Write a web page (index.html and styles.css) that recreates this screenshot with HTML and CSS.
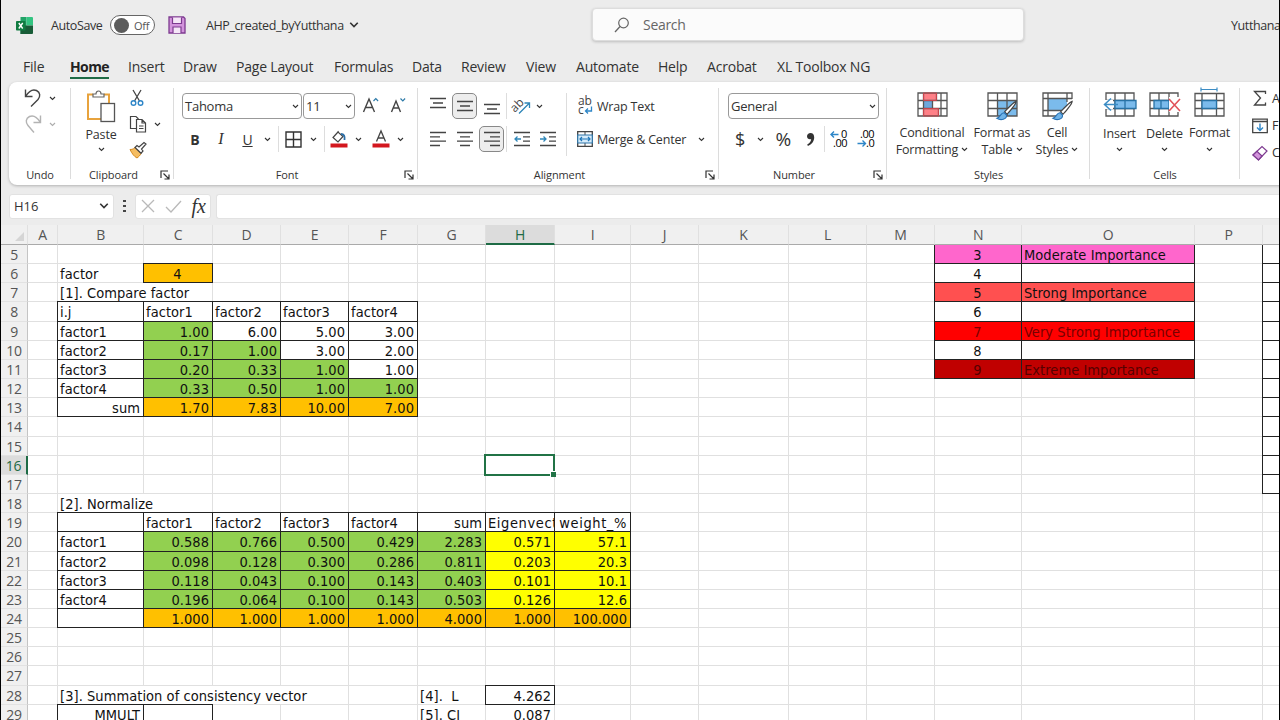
FILE: index.html
```html
<!DOCTYPE html>
<html lang="en">
<head>
  <meta charset="UTF-8">
  <meta name="viewport" content="width=device-width, initial-scale=1.0">
  <title>AHP_created_byYutthana</title>
  <link rel="stylesheet" href="styles.css">
</head>
<body>
  <!-- Shared icon symbols -->
  <svg class="defs">
    <symbol id="caret" viewBox="0 0 8 6"><path d="M1 1.2 4 4.2 7 1.2" fill="none" stroke="#333" stroke-width="1.3"/></symbol>
    <symbol id="launcher" viewBox="0 0 10 10"><path d="M1 8V1h7M3.5 3.5 8.5 8.5M9 4.5V9H4.5" fill="none" stroke="#333" stroke-width="1.2"/></symbol>
    <symbol id="brush" viewBox="0 0 24 24"><path d="M22.5 1.5c-2 .5-11 9-12.5 11.5l2.5 2.5C15 13.5 22.5 4 22.5 1.5z" fill="#fff" stroke="#444" stroke-width="1.3"/><path d="M9.5 14c-4-.5-3.5 4.5-8 6 4 2.5 11 1.5 10.5-3.5z" fill="#6fb3e8" stroke="#2872b5" stroke-width="1.2"/></symbol>
  </svg>

  <div class="window">
    <!-- Title bar -->
    <div class="titlebar">
      <svg class="logo" viewBox="0 0 17 17"><path d="M4.5 0h6v17h-6z" fill="#21a366"/><path d="M10.5 0H16a1 1 0 0 1 1 1v7.5h-6.5z" fill="#33c481"/><path d="M4.5 8.5H17V16a1 1 0 0 1-1 1H4.5z" fill="#185c37"/><rect y="4" width="9.5" height="9.5" rx=".8" fill="#107c41"/><path d="m2.8 6 3.9 5.5M6.7 6l-3.9 5.5" stroke="#fff" stroke-width="1.4"/></svg>
      <span class="autosave">AutoSave</span>
      <span class="toggle"><i></i>Off</span>
      <svg class="save" viewBox="0 0 18 18"><path d="M1 1h14.5L17 2.5V17H1z" fill="#d394dc" stroke="#7d3a90" stroke-width="1.3"/><path d="M4.5 1.5v6h9v-6M5 17v-6h8v6" fill="#f5e6f7" stroke="#7d3a90" stroke-width="1.2"/></svg>
      <span class="filename">AHP_created_byYutthana</span>
      <svg class="caret big"><use href="#caret"/></svg>
      <div class="search">
        <svg viewBox="0 0 16 16"><circle cx="9.5" cy="6" r="4.8" fill="none" stroke="#666" stroke-width="1.2"/><path d="M6 9.5 1 15" stroke="#666" stroke-width="1.3"/></svg>
        <span>Search</span>
      </div>
      <span class="user">Yutthana</span>
    </div>

    <!-- Ribbon tabs -->
    <div class="tabs">
      <span>File</span><span class="active"><b>Home</b></span><span>Insert</span><span>Draw</span><span>Page Layout</span><span>Formulas</span><span>Data</span><span>Review</span><span>View</span><span>Automate</span><span>Help</span><span>Acrobat</span><span>XL Toolbox NG</span>
    </div>

    <!-- Ribbon -->
    <div class="ribbon">
      <div class="group undo">
        <div class="stack">
          <div class="pair">
            <svg width="18" height="20" viewBox="0 0 18 20"><path d="M1.5 1.5v7h7M1.8 8.2C5 3 9 1 12.5 2.5c4 2 4 6 1.5 9L7 18.5" fill="none" stroke="#444" stroke-width="1.4"/></svg>
            <svg class="caret"><use href="#caret"/></svg>
          </div>
          <div class="pair faded">
            <svg width="18" height="20" viewBox="0 0 18 20"><path d="M16.5 1.5v7h-7M16.2 8.2C13 3 9 1 5.5 2.5c-4 2-4 6-1.5 9l6 7" fill="none" stroke="#444" stroke-width="1.4"/></svg>
            <svg class="caret"><use href="#caret"/></svg>
          </div>
        </div>
        <div class="label"><span>Undo</span></div>
      </div>

      <div class="group clipboard">
        <div class="tools">
          <div class="bigbtn paste">
            <svg width="30" height="33" viewBox="0 0 30 33"><path d="M7 4.5H2V29h13M18 4.5h5V13" fill="none" stroke="#e8a33d" stroke-width="2"/><path d="M7 7V4h3c0-4 5-4 5 0h3v3z" fill="#fff" stroke="#666" stroke-width="1.2"/><rect x="15" y="13.5" width="13.5" height="18" fill="#fff" stroke="#555" stroke-width="1.3"/></svg>
            <span>Paste</span>
            <svg class="caret"><use href="#caret"/></svg>
          </div>
          <div class="stack">
            <svg width="16" height="18" viewBox="0 0 16 18"><path d="M4 1l6.5 11M12 1 5.5 12" stroke="#444" stroke-width="1.3"/><circle cx="4.5" cy="14" r="2.3" fill="none" stroke="#2e86c8" stroke-width="1.4"/><circle cx="11.5" cy="14" r="2.3" fill="none" stroke="#2e86c8" stroke-width="1.4"/></svg>
            <div class="pair">
              <svg width="18" height="18" viewBox="0 0 18 18"><path d="M7 13.5H1.5V1.5H7l2.5 2.5" fill="none" stroke="#444" stroke-width="1.2"/><path d="M7.5 4.5h5.5L16.5 8v9h-9zM13 4.5V8h3.5M10 11h4.5M10 13.5h4.5" fill="#fff" stroke="#444" stroke-width="1.2"/></svg>
              <svg class="caret"><use href="#caret"/></svg>
            </div>
            <svg width="18" height="17" viewBox="0 0 18 17"><path d="M1 8c3 0 4-1 5-2l6 6c-1 2-2 3-4 4.5C5 15 3 12 1 8z" fill="#f5bd62" stroke="#d58a20"/><path d="m6 6 2-2 2 1.5L15 1l2 1.5-4.5 5L14 9.5l-2 2.3z" fill="#fff" stroke="#444" stroke-width="1.2"/></svg>
          </div>
        </div>
        <div class="label"><span>Clipboard</span><svg class="launcher"><use href="#launcher"/></svg></div>
      </div>

      <div class="group font">
        <div class="rows">
          <div class="row font-top">
            <div class="combo family"><span>Tahoma</span><svg class="caret"><use href="#caret"/></svg></div>
            <div class="combo size"><span>11</span><svg class="caret"><use href="#caret"/></svg></div>
            <svg width="18" height="18" viewBox="0 0 18 18"><path d="M1.5 15 7 2l5.5 13M3.5 10.5h7" fill="none" stroke="#444" stroke-width="1.4"/><path d="m11.5 4 2.3-2.3L16.1 4" fill="none" stroke="#2c7aa8" stroke-width="1.2"/></svg>
            <svg width="18" height="18" viewBox="0 0 18 18"><path d="M2.5 15 7 4l4.5 11M4 11h6" fill="none" stroke="#444" stroke-width="1.4"/><path d="m11.5 1.5 2.3 2.3 2.3-2.3" fill="none" stroke="#2c7aa8" stroke-width="1.2"/></svg>
          </div>
          <div class="row font-bottom">
            <b>B</b><i>I</i><u>U</u><svg class="caret"><use href="#caret"/></svg>
            <span class="sep"></span>
            <svg width="17" height="17" viewBox="0 0 17 17"><path d="M1 1h15v15H1zM8.5 1v15M1 8.5h15" fill="none" stroke="#333" stroke-width="1.4"/></svg>
            <svg class="caret"><use href="#caret"/></svg>
            <span class="sep"></span>
            <svg width="18" height="18" viewBox="0 0 18 18"><path d="M8 2 3 7.5l5 4.5 5-5.5zM6 4.5 8.5 1" fill="none" stroke="#444" stroke-width="1.2"/><path d="M11 4c3 0 4 2 3.5 6" fill="none" stroke="#2b6fa8" stroke-width="1.8"/><path d="M.5 13.5h17v4H.5z" fill="#d3171e"/></svg>
            <svg class="caret"><use href="#caret"/></svg>
            <svg width="18" height="18" viewBox="0 0 18 18"><path d="M4.5 11.5 9 1l4.500 10.500M6 8h6" fill="none" stroke="#444" stroke-width="1.3"/><path d="M.5 13.5h17v4H.5z" fill="#d3171e"/></svg>
            <svg class="caret"><use href="#caret"/></svg>
          </div>
        </div>
        <div class="label"><span>Font</span><svg class="launcher"><use href="#launcher"/></svg></div>
      </div>

      <div class="group alignment">
        <div class="tools">
          <div class="rows align-left">
            <div class="row">
              <svg class="lines" viewBox="0 0 16 16"><path d="M0 .5h16M3 5h10M0 9.5h16"/></svg>
              <span class="pressed"><svg class="lines" viewBox="0 0 16 16"><path d="M0 3.5h16M3 8h10M0 12.5h16"/></svg></span>
              <svg class="lines" viewBox="0 0 16 16"><path d="M0 6.5h16M3 11h10M0 15.5h16"/></svg>
              <span class="sep"></span>
              <svg width="18" height="18" viewBox="0 0 18 18"><text x="-2" y="11" font-size="12" transform="rotate(-45 6 9)" fill="#444">ab</text><path d="m6 16.5 10-10M11.5 6H16.5v5" fill="none" stroke="#2e86b8" stroke-width="1.3"/></svg>
              <svg class="caret"><use href="#caret"/></svg>
            </div>
            <div class="row">
              <svg class="lines" viewBox="0 0 16 16"><path d="M0 1.5h16M0 5.8h10M0 10.2h16M0 14.5h10"/></svg>
              <svg class="lines" viewBox="0 0 16 16"><path d="M0 1.5h16M3 5.8h10M0 10.2h16M3 14.5h10"/></svg>
              <span class="pressed"><svg class="lines" viewBox="0 0 16 16"><path d="M0 1.5h16M6 5.8h10M0 10.2h16M6 14.5h10"/></svg></span>
              <span class="sep"></span>
              <svg class="lines" viewBox="0 0 16 16"><path d="M0 1.5h16M9 5.8h7M9 10.2h7M0 14.5h16"/><path class="blue" d="M7 8H1M3.5 5.5 1 8l2.5 2.5"/></svg>
              <svg class="lines" viewBox="0 0 16 16"><path d="M0 1.5h16M9 5.8h7M9 10.2h7M0 14.5h16"/><path class="blue" d="M0 8h6M3.5 5.5 6 8l-2.5 2.5"/></svg>
            </div>
          </div>
          <div class="rows align-right">
            <div class="row">
              <svg width="16" height="18" viewBox="0 0 16 18"><text x="1" y="8" font-size="12" fill="#444">ab</text><text x="1" y="17" font-size="12" fill="#444">c</text><path d="M14.5 9.5V14H8.500M11 11.500 8.500 14l2.500 2.500" fill="none" stroke="#2e86c8" stroke-width="1.3"/></svg>
              <span>Wrap Text</span>
            </div>
            <div class="row">
              <svg width="16" height="16" viewBox="0 0 16 16"><path d="M.7.7h14.6v14.6H.7z" fill="#fff" stroke="#444" stroke-width="1.3"/><path d="M8 1v3M8 12v3" stroke="#444"/><path d="M.7 4h14.6v8H.7z" fill="#d5ebfa" stroke="#2e75a8" stroke-width="1.2"/><path d="M3 8h10M5 6 3 8l2 2M11 6l2 2-2 2" fill="none" stroke="#1f76b8" stroke-width="1.2"/></svg>
              <span>Merge &amp; Center</span>
              <svg class="caret"><use href="#caret"/></svg>
            </div>
          </div>
        </div>
        <div class="label"><span>Alignment</span><svg class="launcher"><use href="#launcher"/></svg></div>
      </div>

      <div class="group number">
        <div class="rows">
          <div class="combo"><span>General</span><svg class="caret"><use href="#caret"/></svg></div>
          <div class="row number-bottom">
            <span class="sign">$</span><svg class="caret"><use href="#caret"/></svg><span class="sign percent">%</span>
            <svg width="9" height="15" viewBox="0 0 9 15"><path d="M4.5 1C2.5 1 1 2.3 1 4.2s1.3 3 3 3c.5 0 1-.1 1.2-.2C5 9.5 3.5 11.3 1.2 12.6l.7 1.4C6 12.2 8.2 9 8.2 5.2 8.2 2.6 6.7 1 4.5 1z" fill="#333"/></svg>
            <span class="sep"></span>
            <svg width="18" height="18" viewBox="0 0 18 18"><text x="11" y="8" font-size="11">0</text><text x="3" y="17" font-size="11">.00</text><path d="M8.5 4.5H1M4 1.5l-3 3 3 3" fill="none" stroke="#2e86c8" stroke-width="1.4"/></svg>
            <svg width="18" height="18" viewBox="0 0 18 18"><text x="3" y="8" font-size="11">.00</text><text x="9" y="17" font-size="11">.0</text><path d="M.5 13.5h8M5.5 10.5l3 3-3 3" fill="none" stroke="#2e86c8" stroke-width="1.4"/></svg>
          </div>
        </div>
        <div class="label"><span>Number</span><svg class="launcher"><use href="#launcher"/></svg></div>
      </div>

      <div class="group styles">
        <div class="tools">
          <div class="bigbtn">
            <svg width="31" height="28" viewBox="0 0 31 28"><path d="M1 2h29v23H1z" fill="#fff"/><path d="M6.5 2h13v7.5h-13zM6.5 17.5h15V25h-15z" fill="#ff8087"/><path d="M6.5 9.5h9v8h-9z" fill="#6ea7dc"/><path d="M1 2h29v23H1zM6.5 2v23M1 9.5h29M1 17.5h29M19.5 2v7.5M24 2v23M21.5 17.5V25M15.5 9.5v8" fill="none" stroke="#555" stroke-width="1.3"/><path d="M6.5 2h13v7.5h-13zM6.5 17.5h15V25h-15z" fill="none" stroke="#c9444c"/></svg>
            <span>Conditional</span><span>Formatting <svg class="caret"><use href="#caret"/></svg></span>
          </div>
          <div class="bigbtn">
            <svg width="31" height="28" viewBox="0 0 31 28"><path d="M1 2h29v23H1z" fill="#fff"/><path d="M10.5 9.5H30V25H10.5z" fill="#7bbbec"/><path d="M1 2h29v23H1zM10.5 2v23M20 2v23M1 9.5h29M1 17.5h29" fill="none" stroke="#555" stroke-width="1.3"/><use href="#brush" x="8" y="9" width="23" height="22"/></svg>
            <span>Format as</span><span>Table <svg class="caret"><use href="#caret"/></svg></span>
          </div>
          <div class="bigbtn">
            <svg width="31" height="28" viewBox="0 0 31 28"><path d="M1 2h29v23H1z" fill="#fff"/><path d="M6 7.5h19v12H6z" fill="#7bbbec"/><path d="M30 8V2H1v23h17M6 2v23M1 7.5h29M1 19.5h20M25 2v9" fill="none" stroke="#555" stroke-width="1.3"/><use href="#brush" x="9" y="9" width="23" height="22"/></svg>
            <span>Cell</span><span>Styles <svg class="caret"><use href="#caret"/></svg></span>
          </div>
        </div>
        <div class="label"><span>Styles</span></div>
      </div>

      <div class="group cells">
        <div class="tools">
          <div class="bigbtn">
            <svg width="34" height="28" viewBox="0 0 34 28"><path d="M3 2h28v23H3zM12 2v23M22 2v23M3 9.5h28M3 17.5h28" fill="#fff" stroke="#555" stroke-width="1.3"/><path d="M12 9.5h21v8H12zM22 9.5v8" fill="#7bbbec" stroke="#2872a5" stroke-width="1.3"/><path d="M0 9h10v9H0z" fill="#fff"/><path d="M15 13.5H1.5M8 7.5l-6.5 6 6.5 6" fill="none" stroke="#3b8cc4" stroke-width="1.5"/></svg>
            <span>Insert</span><svg class="caret"><use href="#caret"/></svg>
          </div>
          <div class="bigbtn">
            <svg width="32" height="28" viewBox="0 0 32 28"><path d="M1 2h28v23H1zM10 2v23M20 2v23M1 9.5h28M1 17.5h28" fill="#fff" stroke="#555" stroke-width="1.3"/><path d="M5 9.5h15v8H5zM12 9.5v8" fill="#7bbbec" stroke="#2872a5" stroke-width="1.3"/><path d="M20 6h12v15H20z" fill="#fff"/><path d="m20 8 11 12M31 8 20 20" stroke="#e1525a" stroke-width="1.6"/></svg>
            <span>Delete</span><svg class="caret"><use href="#caret"/></svg>
          </div>
          <div class="bigbtn format">
            <svg width="31" height="32" viewBox="0 0 31 32"><path d="M7 2.5h16M7 .5v4M23 .5v4" stroke="#3b8cc4" stroke-width="1.2"/><path d="M1 6.5h29V29H1zM8 6.5V29M22.5 6.5V29M1 13.5h29M1 21.5h29" fill="#fff" stroke="#555" stroke-width="1.3"/><path d="M8 13.5h14.5v8H8z" fill="#7bbbec" stroke="#2872a5" stroke-width="1.3"/></svg>
            <span>Format</span><svg class="caret"><use href="#caret"/></svg>
          </div>
        </div>
        <div class="label"><span>Cells</span></div>
      </div>

      <div class="group editing">
        <div class="stack">
          <div class="pair"><svg width="16" height="17" viewBox="0 0 16 17"><path d="M13.5 4V1.5h-11L8.5 8l-6 7h11v-2.5" fill="none" stroke="#444" stroke-width="1.3"/></svg><span>AutoSum</span></div>
          <div class="pair"><svg width="16" height="16" viewBox="0 0 16 16"><path d="M.7 1.2h14.6v13.5H.7zM1 3.5h14" fill="#fff" stroke="#444" stroke-width="1.3"/><path d="M8 5.5v7M5 9.5l3 3 3-3" fill="none" stroke="#2e86c8" stroke-width="1.4"/></svg><span>Fill</span></div>
          <div class="pair"><svg width="16" height="16" viewBox="0 0 16 16"><path d="m1 10 9-8.5 5 4.5-8.5 9z" fill="#fff" stroke="#7d3a90" stroke-width="1.2"/><path d="m1 10 4-3.7 5 4.7-3.5 4z" fill="#d394dc" stroke="#7d3a90" stroke-width="1.2"/></svg><span>Clear</span></div>
        </div>
      </div>
    </div>

    <!-- Formula bar -->
    <div class="formula-bar">
      <div class="name-box"><span>H16</span><svg class="caret big"><use href="#caret"/></svg></div>
      <span class="dots"><i></i><i></i><i></i></span>
      <div class="fx">
        <svg width="14" height="14" viewBox="0 0 14 14"><path d="m1 1 12 12M13 1 1 13" stroke="#b9b9b9" stroke-width="1.3"/></svg>
        <svg width="17" height="13" viewBox="0 0 17 13"><path d="m1 7 5 5L16 1" fill="none" stroke="#b9b9b9" stroke-width="1.3"/></svg>
        <em>fx</em>
      </div>
      <div class="formula-input"></div>
    </div>

    <!-- Worksheet, filled in by sheet.js -->
    <div class="sheet" id="sheet"></div>
  </div>

  <script src="sheet.js"></script>
</body>
</html>
```

FILE: styles.css
```css
* {
  box-sizing: border-box;
}

body {
  margin: 0;
  font-family: "Open Sans", "Noto Sans", sans-serif;
  font-size: 12px;
  color: #333;
  overflow: hidden;
}

.defs {
  position: absolute;
  width: 0;
  height: 0;
}

.window {
  width: 1280px;
  height: 720px;
  background: #ececec;
  border-left: 1px solid #000;
  border-right: 1px solid #000;
  overflow: hidden;
}

svg {
  flex: none;
  overflow: visible;
}

.caret {
  width: 7px;
  height: 5px;
}

.caret.big {
  width: 10px;
  height: 8px;
}

/* Title bar */
.titlebar {
  display: flex;
  align-items: center;
  height: 50px;
  padding-left: 15px;
  white-space: nowrap;
  overflow: hidden;
}

.titlebar > * {
  flex: none;
}

.logo {
  width: 17px;
  height: 17px;
}

.autosave {
  width: 59px;
  margin-left: 18px;
  font-size: 12.5px;
  letter-spacing: -0.4px;
}

.toggle {
  display: flex;
  align-items: center;
  width: 45px;
  height: 20px;
  padding-left: 3px;
  gap: 5px;
  border: 1px solid #666;
  border-radius: 10px;
  background: #fff;
  font-size: 11px;
  letter-spacing: -0.3px;
  color: #555;
}

.toggle i {
  width: 15px;
  height: 15px;
  border-radius: 50%;
  background: #5c5c5c;
}

.save {
  width: 18px;
  height: 18px;
  margin-left: 13px;
}

.filename {
  width: 143px;
  margin-left: 20px;
  font-size: 12.5px;
  letter-spacing: -0.4px;
}

.search {
  display: flex;
  align-items: center;
  width: 432px;
  height: 33px;
  margin: 0 0 1px 233px;
  padding-left: 21px;
  gap: 13px;
  border: 1px solid #ddd;
  border-radius: 4px;
  background: #fbfbfb;
  box-shadow: 0 1px 3px rgba(0, 0, 0, 0.2);
  font-size: 14px;
  letter-spacing: -0.3px;
  color: #666;
}

.search svg {
  width: 16px;
  height: 16px;
}

.user {
  margin-left: 207px;
  font-size: 12.5px;
  letter-spacing: -0.4px;
}

/* Ribbon tabs */
.tabs {
  display: grid;
  grid-template-columns: 47px 58px 55px 53px 98px 78px 49px 65px 50px 82px 49px 70px 110px;
  height: 32px;
  padding: 5px 0 0 22px;
  font-size: 14px;
  letter-spacing: -0.2px;
  line-height: 23px;
  white-space: nowrap;
}

.tabs .active b {
  display: inline-block;
  height: 24px;
  border-bottom: 2px solid #1e6b45;
  color: #222;
  letter-spacing: -0.6px;
}

/* Ribbon */
.ribbon {
  display: flex;
  width: 1290px;
  height: 103px;
  margin-left: 8px;
  border-radius: 8px 0 0 8px;
  background: #fff;
  box-shadow: 0 1px 3px rgba(0, 0, 0, 0.25);
}

.group {
  display: flex;
  flex-direction: column;
  flex: none;
  height: 103px;
  position: relative;
}

.group::after {
  content: "";
  position: absolute;
  right: 0;
  top: 6px;
  bottom: 6px;
  width: 1px;
  background: #dcdcdc;
}

.label {
  display: flex;
  align-items: center;
  height: 19px;
  margin-top: auto;
  margin-bottom: 1px;
  font-size: 11px;
  letter-spacing: -0.1px;
}

.label span {
  flex: 1;
  text-align: center;
}

.label span:not(:last-child) {
  padding-right: 4px;
}

.launcher {
  width: 10px;
  height: 10px;
  margin-right: 4px;
}

.tools {
  display: flex;
}

.rows {
  display: flex;
  flex-direction: column;
  gap: 7px;
  padding-top: 11px;
}

.row {
  display: grid;
  align-items: center;
  justify-items: center;
  height: 26px;
  white-space: nowrap;
}

.sep {
  width: 1px;
  height: 26px;
  background: #ddd;
}

.stack {
  display: flex;
  flex-direction: column;
  padding-top: 3px;
}

.stack > * {
  height: 26px;
}

.pair {
  display: flex;
  align-items: center;
}

.combo {
  display: flex;
  align-items: center;
  justify-content: space-between;
  height: 26px;
  padding: 0 2px;
  border: 1px solid #999;
  border-radius: 4px;
  font-size: 13px;
  letter-spacing: -0.25px;
}

.bigbtn {
  display: flex;
  flex-direction: column;
  align-items: center;
  font-size: 12.5px;
  letter-spacing: -0.15px;
  line-height: 17px;
  white-space: nowrap;
}

.bigbtn .caret {
  vertical-align: 2px;
}

.undo {
  width: 62px;
}

.undo .stack {
  padding-left: 15px;
}

.undo .pair {
  gap: 7px;
}

.undo .faded {
  opacity: 0.4;
}

.clipboard {
  width: 103px;
}

.paste {
  width: 58px;
  padding: 8px 0 0 2px;
}

.paste span {
  margin-top: 3px;
  margin-bottom: 4px;
}

.clipboard .stack {
  padding-top: 7px;
}

.clipboard .stack > svg {
  height: 18px;
}

.clipboard .stack .pair {
  height: 34px;
  gap: 7px;
}

.font {
  width: 244px;
}

.font .rows {
  padding-left: 8px;
}

.font-top {
  grid-template-columns: 121px 52px 31px 24px;
}

.family {
  width: 120px;
  justify-self: start;
}

.size {
  width: 52px;
  padding-right: 2px;
}

.font-bottom {
  grid-template-columns: 26px 26px 27px 13px 8px 22px 18px 4px 26px 12px 33px 6px;
  font-size: 14px;
}

.font-bottom i {
  font-family: "Liberation Serif", serif;
  font-size: 16px;
}

.alignment {
  width: 301px;
}

.align-left {
  width: 148px;
  padding-left: 7px;
}

.align-left .row {
  grid-template-columns: 26px 27px 27px 3px 28px 24px;
}

.align-left .row .caret {
  justify-self: start;
}

.lines {
  width: 16px;
  height: 16px;
  fill: none;
  stroke: #444;
  stroke-width: 1.3;
}

.lines .blue {
  stroke: #2e86b8;
}

.pressed {
  display: flex;
  align-items: center;
  justify-content: center;
  width: 25px;
  height: 26px;
  border: 1px solid #888;
  border-radius: 5px;
  background: #ededed;
}

.align-right {
  position: relative;
  width: 152px;
  padding-left: 11px;
}

.align-right::before {
  content: "";
  position: absolute;
  left: 0;
  top: 11px;
  height: 63px;
  width: 1px;
  background: #ddd;
}

.align-right .row {
  grid-template-columns: 16px 97px 16px;
  justify-items: start;
  column-gap: 4px;
  font-size: 12.5px;
  letter-spacing: -0.2px;
}

.number {
  width: 168px;
}

.number .rows {
  padding-left: 9px;
}

.number .combo {
  width: 151px;
}

.number-bottom {
  grid-template-columns: 24px 16px 30px 24px 4px 26px 28px;
  letter-spacing: -0.5px;
}

.sign {
  font-size: 18px;
}

.percent {
  font-size: 19px;
}

.styles {
  width: 203px;
}

.styles .tools {
  display: grid;
  grid-template-columns: 74px 66px 44px;
  padding: 9px 0 0 8px;
}

.styles .bigbtn > svg {
  margin-bottom: 5px;
}

.cells {
  width: 150px;
}

.cells .tools {
  display: grid;
  grid-template-columns: 45px 45px 45px;
  padding: 9px 0 0 7px;
}

.cells .bigbtn span {
  margin-top: 6px;
  margin-bottom: 5px;
}

.cells .format {
  margin-top: -4px;
}

.cells .format span {
  margin-top: 5px;
  margin-bottom: 6px;
}

.editing {
  padding-left: 12px;
  font-size: 12.5px;
}

.editing::after {
  display: none;
}

.editing .pair {
  gap: 4px;
}

.editing .stack > * {
  height: 27px;
}

/* Formula bar */
.formula-bar {
  display: flex;
  align-items: center;
  height: 37px;
  margin-top: 3px;
  padding: 0 0 1px 8px;
}

.name-box {
  display: flex;
  align-items: center;
  justify-content: space-between;
  width: 105px;
  height: 25px;
  padding: 0 4px;
  border: 1px solid #e2e2e2;
  border-radius: 3px;
  background: #fff;
  font-size: 13px;
}

.dots {
  display: flex;
  flex-direction: column;
  gap: 3px;
  margin: 0 9px 0 9px;
}

.dots i {
  width: 3px;
  height: 2px;
  background: #444;
}

.fx {
  display: flex;
  align-items: center;
  justify-content: space-between;
  width: 76px;
  height: 25px;
  padding: 0 4px 0 5px;
  border: 1px solid #e2e2e2;
  border-radius: 3px;
  background: #fff;
}

.fx em {
  font-family: "Liberation Serif", serif;
  font-size: 20px;
  line-height: 20px;
}

.formula-input {
  flex: 1;
  height: 25px;
  margin-left: 5px;
  border: 1px solid #e2e2e2;
  border-right: none;
  border-radius: 3px 0 0 3px;
  background: #fff;
}

/* Worksheet */
.sheet {
  display: grid;
  grid-template-columns: 27px 29px 86px 69px 68px 69px 68px 68px 69px 77px 68px 90px 78px 68px 87px 173px 68px 60px;
  grid-template-columns: 27px 30px 86px 69px 68px 68px 69px 68px 69px 76px 68px 90px 78px 68px 87px 173px 68px 60px;
  grid-template-rows: 20px;
  grid-auto-rows: 19.17px;
  background: #fff;
}

.col-head,
.row-head {
  background: #f0f0f0;
  color: #555;
  font-size: 14px;
  letter-spacing: -0.3px;
  text-align: center;
}

.col-head {
  position: relative;
  z-index: 1;
  line-height: 20px;
  border-right: 1px solid #e0e0e0;
  border-bottom: 1px solid #aaa;
}

.row-head {
  line-height: 19px;
  border-right: 1px solid #c4c4c4;
  border-bottom: 1px solid #e2e2e2;
}

.col-head.selected {
  background: #dcdcdc;
  color: #1e6b45;
  border-bottom: 2px solid #1e6b45;
}

.row-head.selected {
  background: #dcdcdc;
  color: #1e6b45;
  border-right: 2px solid #1e6b45;
}

.corner {
  display: flex;
  align-items: flex-end;
  justify-content: flex-end;
  padding: 0 3px 3px 0;
}

.cell {
  padding: 1px 3px 0 2px;
  border-right: 1px solid #e0e0e0;
  border-bottom: 1px solid #e0e0e0;
  font-family: "DejaVu Sans Condensed", "DejaVu Sans", sans-serif;
  font-size: 14.5px;
  letter-spacing: 0.05px;
  line-height: 18px;
  color: #111;
  white-space: pre;
  overflow: hidden;
}

/* boxed cells cover the gridlines of their left and upper neighbours */
.boxed {
  margin: -1px 0 0 -1px;
  border: 1px solid #222;
}

.wide {
  letter-spacing: 0.6px;
}

.right {
  text-align: right;
}

.center {
  text-align: center;
}

.green {
  background: #92d050;
}

.orange {
  background: #ffc000;
}

.yellow {
  background: #ffff00;
}

.pink {
  background: #ff66cc;
}

.coral {
  background: #ff5050;
}

.red {
  background: #ff0000;
  color: #700;
}

.darkred {
  background: #c00000;
  color: #500;
}

.cursor {
  position: relative;
  margin: -2px 0 -1px -2px;
  border: 2px solid #217346;
  overflow: visible;
}

.cursor::after {
  content: "";
  position: absolute;
  right: -3px;
  bottom: -3px;
  width: 5px;
  height: 5px;
  border: solid #fff;
  border-width: 1px 0 0 1px;
  background: #217346;
}
```

FILE: sheet.js
```js
const columns = 'ABCDEFGHIJKLMNOPQ'.split('');
const firstRow = 5;
const lastRow = 29;
const cells = {};

// Store a cell: text, class names and how many columns it takes
function put(ref, text, style = '', span = 1) {
  cells[ref] = { text, style, span };
}

// Store a run of cells from one start column
function putRow(startCol, row, values, style) {
  const start = columns.indexOf(startCol);
  values.forEach((value, i) => put(columns[start + i] + row, value, style));
}

put('B6', 'factor');
put('C6', '4', 'boxed center orange');
put('B7', '[1]. Compare factor', '', 2);

// Pairwise comparison
putRow('B', 8, ['i.j', 'factor1', 'factor2', 'factor3', 'factor4'], 'boxed');
const compare = [
  ['1.00', '6.00', '5.00', '3.00'],
  ['0.17', '1.00', '3.00', '2.00'],
  ['0.20', '0.33', '1.00', '1.00'],
  ['0.33', '0.50', '1.00', '1.00']
];
compare.forEach((values, r) => {
  put('B' + (9 + r), 'factor' + (r + 1), 'boxed');
  values.forEach((value, c) => {
    put(columns[2 + c] + (9 + r), value, 'boxed right' + (c <= r ? ' green' : ''));
  });
});
put('B13', 'sum', 'boxed right');
putRow('C', 13, ['1.70', '7.83', '10.00', '7.00'], 'boxed right orange');

put('H16', '', 'cursor');

// Normalized matrix
put('B18', '[2]. Normalize', '', 2);
putRow('B', 19, ['', 'factor1', 'factor2', 'factor3', 'factor4'], 'boxed');
put('G19', 'sum', 'boxed right');
put('H19', 'Eigenvector', 'boxed wide');
put('I19', 'weight_%', 'boxed right wide');
const normal = [
  ['0.588', '0.766', '0.500', '0.429', '2.283', '0.571', '57.1'],
  ['0.098', '0.128', '0.300', '0.286', '0.811', '0.203', '20.3'],
  ['0.118', '0.043', '0.100', '0.143', '0.403', '0.101', '10.1'],
  ['0.196', '0.064', '0.100', '0.143', '0.503', '0.126', '12.6']
];
normal.forEach((values, r) => {
  put('B' + (20 + r), 'factor' + (r + 1), 'boxed');
  putRow('C', 20 + r, values.slice(0, 5), 'boxed right green');
  putRow('H', 20 + r, values.slice(5), 'boxed right yellow');
});
put('B24', '', 'boxed');
putRow('C', 24, ['1.000', '1.000', '1.000', '1.000', '4.000', '1.000', '100.000'], 'boxed right orange');

// Consistency
put('B28', '[3]. Summation of consistency vector', '', 4);
put('G28', '[4].  L');
put('H28', '4.262', 'boxed right');
put('B29', 'MMULT', 'boxed right');
put('C29', '', 'boxed');
put('G29', '[5]. CI');
put('H29', '0.087', 'right');

// Importance scale
const scale = [
  ['3', 'Moderate Importance', 'pink'],
  ['4', '', ''],
  ['5', 'Strong Importance', 'coral'],
  ['6', '', ''],
  ['7', 'Very Strong Importance', 'red'],
  ['8', '', ''],
  ['9', 'Extreme Importance', 'darkred']
];
scale.forEach(([value, name, color], i) => {
  put('N' + (5 + i), value, 'boxed center ' + color);
  put('O' + (5 + i), name, 'boxed ' + color);
});
for (let row = 5; row <= 17; row++) {
  put('Q' + row, '', 'boxed');
}

// Build the grid
let html = '<div class="col-head corner"><svg width="9" height="9"><path d="M9 0v9H0z" fill="#d5d5d5"/></svg></div>';
columns.forEach(col => {
  html += `<div class="col-head${col === 'H' ? ' selected' : ''}">${col === 'Q' ? '' : col}</div>`;
});
for (let row = firstRow; row <= lastRow; row++) {
  html += `<div class="row-head${row === 16 ? ' selected' : ''}">${row}</div>`;
  for (let c = 0; c < columns.length; c++) {
    const cell = cells[columns[c] + row] || { text: '', style: '', span: 1 };
    const span = cell.span > 1 ? ` style="grid-column: span ${cell.span}"` : '';
    html += `<div class="cell ${cell.style}"${span}>${cell.text}</div>`;
    c += cell.span - 1;
  }
}
document.getElementById('sheet').innerHTML = html;
```
